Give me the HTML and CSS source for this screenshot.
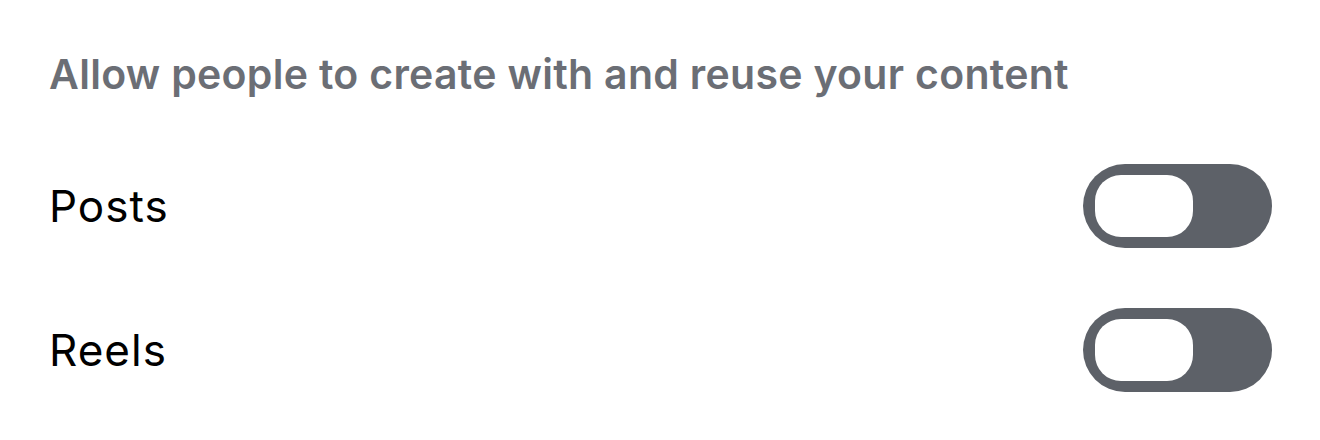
FILE: index.html
```html
<!DOCTYPE html>
<html>
<head>
<meta charset="utf-8">
<link rel="stylesheet" href="styles.css">
</head>
<body>
<div class="page">
  <h2 class="heading">Allow people to create with and reuse your content</h2>
  <div class="row">
    <span class="label">Posts</span>
    <div class="toggle"><div class="knob"></div></div>
  </div>
  <div class="row">
    <span class="label">Reels</span>
    <div class="toggle"><div class="knob"></div></div>
  </div>
</div>
</body>
</html>
```
FILE: styles.css
```css
html, body {
  margin: 0;
  background: #ffffff;
}
.page {
  width: 1320px;
  height: 440px;
  box-sizing: border-box;
  padding: 48px 48px 0 49px;
  font-family: Inter, "Liberation Sans", sans-serif;
}
.heading {
  margin: 0;
  font-size: 41px;
  font-weight: 600;
  color: #6b6e75;
  line-height: 52px;
  letter-spacing: 0.3px;
}
.row {
  display: flex;
  align-items: center;
  justify-content: space-between;
  height: 144px;
}
.row:first-of-type {
  margin-top: 34px;
}
.label {
  font-size: 44px;
  color: #000000;
  font-weight: 400;
  letter-spacing: 1px;
}
.toggle {
  width: 189px;
  height: 84px;
  border-radius: 42px;
  background: #5d6168;
  box-sizing: border-box;
  padding: 11px 12px;
  display: flex;
}
.knob {
  width: 98px;
  height: 62px;
  border-radius: 26px;
  background: #ffffff;
}
```
